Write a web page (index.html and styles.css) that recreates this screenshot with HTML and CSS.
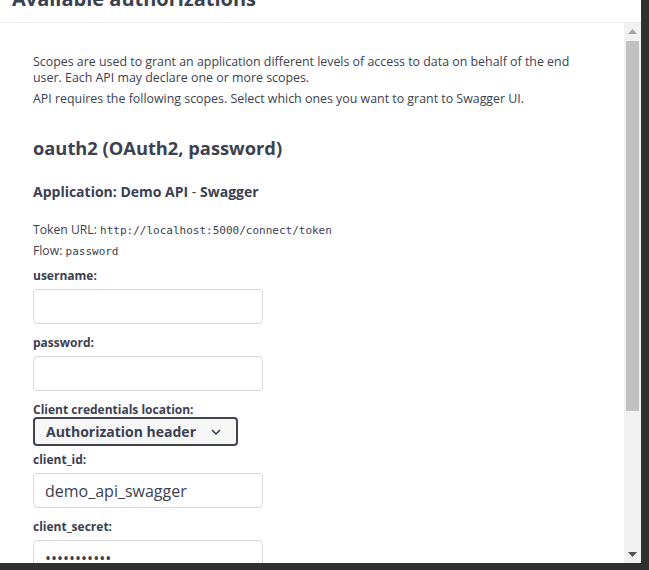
FILE: index.html
```html
<!DOCTYPE html>
<html lang="en">

<head>
    <meta charset="UTF-8">
    <meta name="viewport" content="width=device-width, initial-scale=1.0">
    <title>Available authorizations</title>
    <link rel="stylesheet" href="styles.css">
</head>

<body>
    <div class="modal">
        <div class="modal-header">
            <h3>Available authorizations</h3>
        </div>
        <div class="modal-body">
            <div class="scroll-content">
                <p class="desc">Scopes are used to grant an application different levels of access to data on behalf of the end user. Each API may declare one or more scopes.</p>
                <p class="desc second">API requires the following scopes. Select which ones you want to grant to Swagger UI.</p>

                <h4>oauth2 (OAuth2, password)</h4>
                <h5>Application: Demo API <span class="dash">-</span> Swagger</h5>

                <p class="meta">Token URL: <code>http://localhost:5000/connect/token</code></p>
                <p class="meta">Flow: <code>password</code></p>

                <label for="username">username:</label>
                <input type="text" id="username">

                <label for="password">password:</label>
                <input type="password" id="password">

                <label for="location">Client credentials location:</label>
                <div class="select-wrap">
                    <select id="location">
                        <option>Authorization header</option>
                        <option>Request body</option>
                    </select>
                    <svg class="chevron" width="10" height="6" viewBox="0 0 10 6">
                        <path d="M1 1l4 4 4-4" fill="none" stroke="#3b4151" stroke-width="1.6"/>
                    </svg>
                </div>

                <label for="client_id">client_id:</label>
                <input type="text" id="client_id" value="demo_api_swagger">

                <label for="client_secret">client_secret:</label>
                <input type="password" id="client_secret" value="secret12345">
            </div>

            <!-- scrollbar drawn by hand, headless screenshots hide the native one -->
            <div class="scrollbar">
                <div class="scroll-btn">
                    <svg width="9" height="5" viewBox="0 0 9 5"><path d="M0 5h9L4.5 0z" fill="#a3a3a3"/></svg>
                </div>
                <div class="scroll-track">
                    <div class="scroll-thumb"></div>
                </div>
                <div class="scroll-btn">
                    <svg width="9" height="5" viewBox="0 0 9 5"><path d="M0 0h9L4.5 5z" fill="#505050"/></svg>
                </div>
            </div>
        </div>
    </div>
</body>

</html>
```

FILE: styles.css
```css
body {
    margin: 0;
    padding-top: 1px;
    background-color: #303030;
    font-family: "Open Sans", sans-serif;
    color: #3b4151;
    height: 569px;
    overflow: hidden;
}

.modal {
    width: 641px;
    height: 591px;
    margin-top: -29px;
    background-color: white;
    display: flex;
    flex-direction: column;
    overflow: hidden;
}

.modal-header {
    padding: 15px 12px 11px;
    border-bottom: 1px solid #ebebeb;
}

.modal-header h3 {
    margin: 0;
    font-size: 20px;
    line-height: 24px;
    font-weight: 700;
}

.modal-body {
    display: flex;
    flex: 1;
    min-height: 0;
}

.scroll-content {
    flex: 1;
    overflow: hidden;
    padding: 31px 33px 0;
}

.scrollbar {
    width: 17px;
    display: flex;
    flex-direction: column;
    background-color: #f1f1f1;
}

.scroll-btn {
    height: 17px;
    display: flex;
    align-items: center;
    justify-content: center;
}

.scroll-track {
    flex: 1;
    padding: 1px 2px 0;
}

.scroll-thumb {
    height: 370px;
    background-color: #c1c1c1;
}

.desc {
    margin: 0;
    font-size: 12.4px;
    line-height: 16px;
}

.desc.second {
    margin-top: 5px;
}

h4 {
    margin: 29px 0 0;
    font-size: 18.3px;
    line-height: 24px;
    font-weight: 700;
}

h5 {
    margin: 23px 0 0;
    font-size: 14px;
    line-height: 18px;
    font-weight: 700;
}

h5 .dash {
    font-weight: 400;
}

.meta {
    margin: 4px 0 0;
    font-size: 12.2px;
    line-height: 16px;
}

h5 + .meta {
    margin-top: 21px;
}

code {
    font-family: "DejaVu Sans Mono", monospace;
    font-size: 11px;
}

label {
    display: block;
    margin-top: 11px;
    font-size: 12px;
    line-height: 16px;
    font-weight: 700;
}

.meta + label {
    margin-top: 8px;
}

input[type="text"],
input[type="password"] {
    display: block;
    box-sizing: border-box;
    width: 230px;
    height: 35px;
    margin-top: 5px;
    padding: 0 11px;
    border: 1px solid #d9d9d9;
    border-radius: 4px;
    font-family: "Open Sans", sans-serif;
    font-size: 16px;
    color: #3b4151;
    background-color: white;
}

.select-wrap {
    position: relative;
    width: 205px;
    margin-top: -1px;
}

select {
    display: block;
    appearance: none;
    box-sizing: border-box;
    width: 205px;
    height: 29px;
    padding: 0 11px;
    border: 2px solid #41444e;
    border-radius: 4px;
    background-color: #f7f7f7;
    font-family: "Open Sans", sans-serif;
    font-size: 14px;
    font-weight: 700;
    color: #3b4151;
}

.chevron {
    position: absolute;
    right: 17px;
    top: 12px;
    pointer-events: none;
}

.select-wrap + label {
    margin-top: 6px;
}
```
